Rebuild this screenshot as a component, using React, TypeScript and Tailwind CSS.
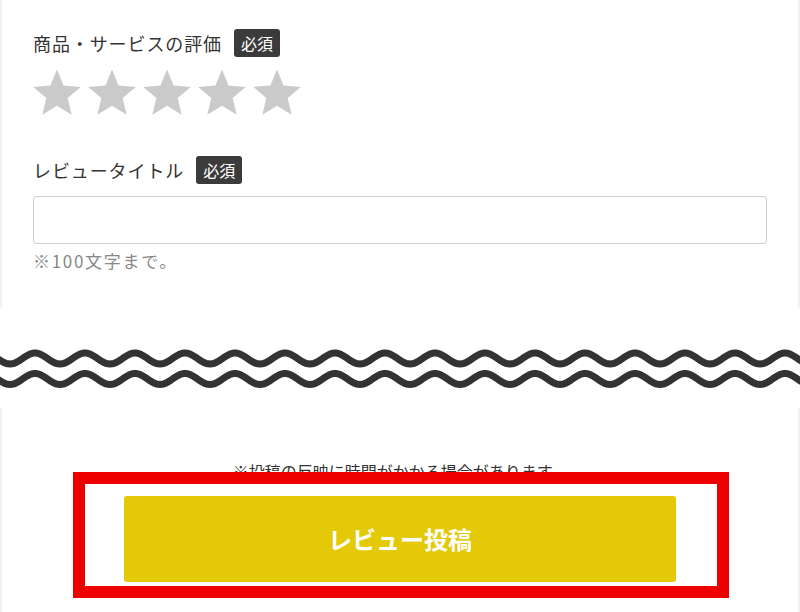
import type { ReactNode } from 'react';

const WAVE_PERIOD = 50;
const WAVE_AMP = 5.5;

// sampled sine, peaks around x = 35 + 50k
function wavePath(centerY: number) {
  const pts: string[] = [];
  for (let x = -10; x <= 810; x += 2) {
    const y = centerY - WAVE_AMP * Math.cos(((x - 35) / WAVE_PERIOD) * Math.PI * 2);
    pts.push(`${x === -10 ? 'M' : 'L'}${x} ${y.toFixed(2)}`);
  }
  return pts.join(' ');
}

function Badge() {
  return (
    <span className="inline-flex h-[28px] items-center rounded-[3px] bg-[#3b3b3b] px-[7px] text-[16px] leading-none text-white">
      必須
    </span>
  );
}

function FieldLabel({ children }: { children: ReactNode }) {
  return (
    <div className="flex h-[28px] items-center gap-[12px]">
      <span className="text-[18px] tracking-[0.05em] text-[#333]">{children}</span>
      <Badge />
    </div>
  );
}

function Star() {
  return (
    <svg viewBox="0 0 24 24" className="h-[48px] w-[48px]" fill="#cacaca">
      <path d="M12 0.8L15.29 8.77L23.89 9.44L17.33 15.03L19.35 23.41L12 18.9L4.65 23.41L6.67 15.03L0.11 9.44L8.71 8.77Z" />
    </svg>
  );
}

export default function App() {
  return (
    <div
      className="flex h-[612px] w-[800px] flex-col overflow-hidden bg-white"
      style={{ fontFamily: '"Noto Sans CJK JP", "Noto Sans", sans-serif' }}
    >
      {/* Form card */}
      <section className="flex h-[308px] flex-col border-x-2 border-[#f1f1f1] px-[31px] pt-[29px]">
        <FieldLabel>商品・サービスの評価</FieldLabel>
        <div className="mt-[11px] flex gap-[7px]">
          {[0, 1, 2, 3, 4].map((i) => (
            <Star key={i} />
          ))}
        </div>

        <div className="mt-[40px]">
          <FieldLabel>レビュータイトル</FieldLabel>
        </div>
        <input
          type="text"
          className="mt-[12px] h-[48px] w-full rounded-[4px] border-[1.5px] border-[#cfcfcf] bg-white px-3 outline-none"
        />
        <p className="mt-[4px] text-[17px] leading-[26px] tracking-[0.1em] text-[#888]">※100文字まで。</p>
      </section>

      {/* Omitted part */}
      <div className="flex h-[100px] items-start pt-[35px]">
        <svg width="800" height="50" viewBox="0 0 800 50" className="block">
          <path d={wavePath(15.5)} fill="none" stroke="#333" strokeWidth="7" />
          <path d={wavePath(36)} fill="none" stroke="#333" strokeWidth="7" />
        </svg>
      </div>

      {/* Submit card */}
      <section className="flex flex-1 flex-col items-center border-x-2 border-[#f1f1f1] pt-[51px]">
        <p className="text-[16px] leading-[24px] text-[#333]">※投稿の反映に時間がかかる場合があります。</p>
        <div className="relative mt-[13px]">
          <button
            type="button"
            className="flex h-[86px] w-[552px] items-center justify-center rounded-[3px] bg-[#e3c906] text-[24px] font-bold text-white"
          >
            レビュー投稿
          </button>
          <div className="pointer-events-none absolute -top-[24px] -bottom-[16px] -left-[51px] -right-[53px] border-[12px] border-[#ec0000]" />
        </div>
      </section>
    </div>
  );
}
